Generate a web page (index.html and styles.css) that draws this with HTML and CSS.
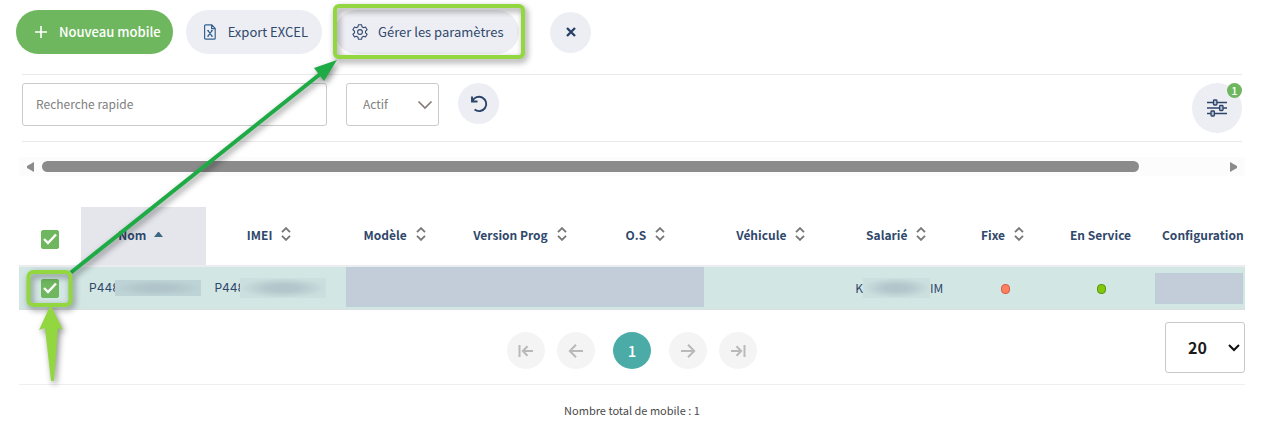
FILE: index.html
```
<!DOCTYPE html>
<html lang="fr">
<head>
    <meta charset="UTF-8">
    <meta name="viewport" content="width=device-width, initial-scale=1.0">
    <title>Mobiles</title>
    <link rel="stylesheet" href="styles.css">
</head>
<body>
    <svg class="symbols" aria-hidden="true">
        <symbol id="sort" viewBox="0 0 10 14">
            <path d="M1 5.2 5 1.2l4 4M1 8.8l4 4 4-4" fill="none" stroke="#777" stroke-width="1.9"/>
        </symbol>
    </svg>

    <div class="toolbar">
        <button type="button" class="btn btn-primary">
            <svg width="12" height="12" viewBox="0 0 12 12"><path d="M6 0v12M0 6h12" stroke="#fff" stroke-width="1.6"/></svg>
            <span>Nouveau mobile</span>
        </button>
        <button type="button" class="btn">
            <svg width="12" height="16" viewBox="0 0 12 16" fill="none" stroke="#34618f" stroke-width="1.2">
                <path d="M1.6.8h6.2l3.4 3.6v9.8a1 1 0 0 1-1 1H1.6a1 1 0 0 1-1-1V1.8a1 1 0 0 1 1-1zM7.6.8v3.8h3.6"/>
                <path d="M4 6.6l4 5.6M8 6.6l-4 5.6M3.2 6.6h1.8M7 6.6h1.8M3.2 12.2h1.8M7 12.2h1.8"/>
            </svg>
            <span>Export EXCEL</span>
        </button>
        <button type="button" class="btn btn-settings">
            <svg width="16" height="16" viewBox="0 0 16 16" fill="none" stroke="#34496d" stroke-width="1.1" stroke-linejoin="round">
                <path d="M6.4.8h3.2l.4 2 1.5.9 2-.7 1.6 2.8-1.6 1.3v1.8l1.6 1.3-1.6 2.8-2-.7-1.5.9-.4 2H6.4l-.4-2-1.5-.9-2 .7-1.6-2.8 1.6-1.3V7.1L.9 5.8 2.5 3l2 .7L6 2.8z"/>
                <circle cx="8" cy="8" r="2.4"/>
            </svg>
            <span>Gérer les paramètres</span>
        </button>
        <button type="button" class="btn-round btn-close" aria-label="Fermer">
            <svg width="10" height="10" viewBox="0 0 10 10"><path d="M1 1l8 8M9 1L1 9" stroke="#263e66" stroke-width="2.3"/></svg>
        </button>
    </div>

    <form class="filters">
        <input type="text" class="search" placeholder="Recherche rapide" aria-label="Recherche rapide">
        <select class="status" aria-label="Statut">
            <option>Actif</option>
            <option>Inactif</option>
        </select>
        <button type="reset" class="btn-round" aria-label="Réinitialiser">
            <svg width="18" height="18" viewBox="0 0 18 18" fill="none" stroke="#2c4469" stroke-width="1.9">
                <path d="M2 1.5v5h5.5M2.4 6.2A7.2 7.2 0 1 1 4.6 14.6"/>
            </svg>
        </button>
        <button type="button" class="btn-round btn-filter" aria-label="Filtres">
            <svg width="22" height="18" viewBox="0 0 22 18" fill="#b9c3d2" stroke="#2c4469" stroke-width="1.3">
                <path d="M1 3.5h20M1 9h20M1 14.5h20" stroke-width="1.6"/>
                <rect x="7.5" y="1" width="3.4" height="5" rx=".8"/>
                <rect x="13.6" y="6.5" width="3.4" height="5" rx=".8"/>
                <rect x="5" y="12" width="3.4" height="5" rx=".8"/>
            </svg>
            <span class="badge">1</span>
        </button>
    </form>

    <div class="scrollbar" aria-hidden="true">
        <svg width="7" height="10" viewBox="0 0 7 10"><path d="M7 0v10L0 6V4z" fill="#8b8b8b"/></svg>
        <div class="track"><div class="thumb"></div></div>
        <svg width="7" height="10" viewBox="0 0 7 10"><path d="M0 0v10l7-4V4z" fill="#8b8b8b"/></svg>
    </div>

    <div class="table-wrap">
        <table>
            <colgroup>
                <col class="col-check">
                <col span="7">
                <col class="col-fixed">
                <col class="col-service">
                <col class="col-config">
            </colgroup>
            <thead>
                <tr>
                    <th class="check"><input type="checkbox" checked aria-label="Tout sélectionner"></th>
                    <th class="sorted"><button type="button">Nom <svg width="9" height="5" viewBox="0 0 9 5"><path d="M0 5l4-5h1l4 5z" fill="#3d6883"/></svg></button></th>
                    <th><button type="button">IMEI <svg width="10" height="14"><use href="#sort"/></svg></button></th>
                    <th><button type="button">Modèle <svg width="10" height="14"><use href="#sort"/></svg></button></th>
                    <th><button type="button">Version Prog <svg width="10" height="14"><use href="#sort"/></svg></button></th>
                    <th><button type="button">O.S <svg width="10" height="14"><use href="#sort"/></svg></button></th>
                    <th><button type="button">Véhicule <svg width="10" height="14"><use href="#sort"/></svg></button></th>
                    <th><button type="button">Salarié <svg width="10" height="14"><use href="#sort"/></svg></button></th>
                    <th><button type="button">Fixe <svg width="10" height="14"><use href="#sort"/></svg></button></th>
                    <th>En Service</th>
                    <th class="config">Configuration</th>
                </tr>
            </thead>
            <tbody>
                <tr>
                    <td class="check"><input type="checkbox" checked aria-label="Sélectionner P448"></td>
                    <td><div class="serial">P448<span class="smudge"></span></div></td>
                    <td><div class="serial">P448<span class="smudge smudge-tall"></span></div></td>
                    <td colspan="3"><div class="mask mask-wide"></div></td>
                    <td></td>
                    <td><div class="employee">K<span class="smudge smudge-tall"></span>IM</div></td>
                    <td class="state"><span class="dot dot-red"></span></td>
                    <td class="state"><span class="dot dot-green"></span></td>
                    <td><div class="mask"></div></td>
                </tr>
            </tbody>
        </table>
    </div>

    <div class="footer">
        <nav class="pager" aria-label="Pagination">
            <button type="button" aria-label="Première page"><svg width="16" height="14" viewBox="0 0 16 14"><path d="M1.5 1v12M15 7H5M9.5 2.2L4.8 7l4.7 4.8"/></svg></button>
            <button type="button" aria-label="Page précédente"><svg width="16" height="14" viewBox="0 0 16 14"><path d="M15 7H2M8 .8L1.8 7 8 13.2"/></svg></button>
            <button type="button" class="current">1</button>
            <button type="button" aria-label="Page suivante"><svg width="16" height="14" viewBox="0 0 16 14"><path d="M1 7h13M8 .8L14.2 7 8 13.2"/></svg></button>
            <button type="button" aria-label="Dernière page"><svg width="16" height="14" viewBox="0 0 16 14"><path d="M14.5 1v12M1 7h10M6.5 2.2L11.2 7l-4.7 4.8"/></svg></button>
        </nav>
        <select class="page-size" aria-label="Lignes par page">
            <option>20</option>
            <option>50</option>
        </select>
    </div>

    <p class="total">Nombre total de mobile : 1</p>

    <!-- callouts drawn over the page -->
    <svg class="callouts" width="560" height="400" viewBox="0 0 560 400" aria-hidden="true">
        <g class="shadow">
            <rect x="335" y="6" width="188" height="51" rx="4" fill="none" stroke="#92d73f" stroke-width="4"/>
        </g>
        <g class="shadow">
            <path d="M71 272.5L324 71" stroke="#1eaa45" stroke-width="4"/>
            <path d="M337 60l-23 8 10 13z" fill="#1eaa45"/>
        </g>
        <g class="shadow">
            <rect x="28.5" y="272" width="42" height="33" rx="5" fill="none" stroke="#92d73f" stroke-width="4"/>
            <path d="M50.5 305L63 330l-5-2-4 53h-3l-6-53-6 2z" fill="#92d73f"/>
        </g>
    </svg>
</body>
</html>
```
FILE: styles.css
```
* {
    box-sizing: border-box;
}
body {
    position: relative;
    margin: 0;
    padding: 10px 18px 0 19px;
    background: #fff;
    color: #2f486b;
    font-family: "Noto Sans CJK SC", "Open Sans", sans-serif;
    font-size: 12px;
}
button, input, select {
    margin: 0;
    font-family: inherit;
    color: inherit;
}
button {
    padding: 0;
    border: none;
    background: none;
    cursor: pointer;
}
svg {
    flex: none;
}
.symbols {
    position: absolute;
    width: 0;
    height: 0;
}

/* Toolbar */
.toolbar {
    display: flex;
    align-items: center;
    gap: 13px;
    margin-left: -3px;
}
.btn {
    display: flex;
    align-items: center;
    gap: 12px;
    height: 44px;
    padding: 0 14px 0 18px;
    border-radius: 22px;
    background: #edeef3;
    font-size: 13px;
    white-space: nowrap;
}
.btn span {
    padding-bottom: 1px;
}
.btn-primary {
    padding: 0 12px 0 19px;
    background: #6fb75f;
    color: #fff;
    font-weight: 500;
}
.btn-settings {
    gap: 10px;
    padding: 0 16px 0 17px;
}
.btn-round {
    display: flex;
    align-items: center;
    justify-content: center;
    width: 41px;
    height: 41px;
    border-radius: 50%;
    background: #edeef3;
}
.btn-close {
    margin-left: 18px;
}

/* Filters */
.filters {
    display: flex;
    align-items: flex-start;
    gap: 19px;
    margin: 20px 3px 0;
    padding: 8px 0;
    border-top: 1px solid #e9e9ec;
    border-bottom: 1px solid #e9e9ec;
}
.search, .status {
    height: 43px;
    border: 1px solid #cbcbcb;
    border-radius: 3px;
    background-color: #fff;
    color: #808080;
    font-size: 12px;
}
.search {
    width: 305px;
    padding: 0 13px 2px;
}
.search::placeholder {
    color: #808080;
}
.status {
    width: 93px;
    padding: 0 16px 2px;
    appearance: none;
    background-image: url("data:image/svg+xml,%3Csvg xmlns='http://www.w3.org/2000/svg' width='16' height='10'%3E%3Cpath d='M1.5 1.5L8 8l6.5-6.5' fill='none' stroke='%23857c78' stroke-width='1.7'/%3E%3C/svg%3E");
    background-repeat: no-repeat;
    background-position: right 5px center;
}
.btn-filter {
    position: relative;
    width: 50px;
    height: 50px;
    margin-left: auto;
}
.badge {
    position: absolute;
    top: 0;
    right: 0;
    width: 15px;
    height: 15px;
    border-radius: 50%;
    background: #6fb75f;
    color: #fff;
    font-size: 11px;
    font-weight: 500;
    line-height: 15px;
}

/* Horizontal scrollbar */
.scrollbar {
    display: flex;
    align-items: center;
    gap: 8px;
    height: 19px;
    margin-top: 15px;
    padding: 0 8px;
    background: #fcfcfc;
}
.track {
    flex: 1;
}
.thumb {
    width: 93%;
    height: 11px;
    border-radius: 6px;
    background: #8b8b8b;
}

/* Table */
.table-wrap {
    margin-top: 31px;
    overflow: hidden;
}
table {
    width: 100%;
    table-layout: fixed;
    border-collapse: collapse;
}
.col-check {
    width: 62px;
}
.col-fixed {
    width: 87px;
}
.col-service {
    width: 109px;
}
.col-config {
    width: 90px;
}
th {
    height: 59px;
    padding: 0 0 4px;
    border-bottom: 2px solid #ececf0;
    font-size: 12px;
    font-weight: bold;
    white-space: nowrap;
}
th button {
    display: inline-flex;
    align-items: center;
    gap: 9px;
    font-size: 12px;
    font-weight: bold;
}
.sorted {
    padding-right: 6px;
    background: #e5e6ec;
}
.sorted button {
    gap: 8px;
}
.config {
    padding-left: 7px;
    text-align: left;
}
td {
    height: 43px;
    padding: 0;
    border-bottom: 1px solid #dcdfdf;
    background: #d2e6e4;
}
th.check {
    padding: 6px 0 0;
}
.check input {
    display: block;
    width: 18px;
    height: 19px;
    margin: 0 auto;
    appearance: none;
    border-radius: 2px;
    background: #fff;
    border: 1px solid #6fb75f;
}
.check input:checked {
    background: #6fb75f url("data:image/svg+xml,%3Csvg xmlns='http://www.w3.org/2000/svg' width='14' height='12'%3E%3Cpath d='M1 6l4 4L13 1.5' fill='none' stroke='white' stroke-width='2.4'/%3E%3C/svg%3E") no-repeat center;
}
.serial, .employee {
    display: flex;
    align-items: center;
    padding-bottom: 1px;
}
.serial {
    padding-left: 8px;
    font-family: Inter, sans-serif;
}
.employee {
    justify-content: center;
    padding-left: 6px;
}
.smudge {
    width: 86px;
    height: 16px;
    margin-left: -5px;
    background: radial-gradient(closest-side, #b0c4c9 30%, #bed3d5 100%);
}
.smudge-tall {
    height: 20px;
    background: radial-gradient(closest-side, #b2c6cb 30%, #cbdfdf 100%);
}
.employee .smudge {
    width: 67px;
    margin-left: 0;
}
.mask {
    height: 31px;
    margin-right: 2px;
    border: 1px solid #bccfd9;
    background: #c2cdd9;
}
.mask-wide {
    height: 40px;
    margin: 0 4px 2px 14px;
}
.state {
    padding-bottom: 3px;
    text-align: center;
}
.dot {
    display: inline-block;
    width: 9px;
    height: 10px;
    margin-left: 6px;
    border: 1px solid;
    border-radius: 4px;
    vertical-align: middle;
}
.dot-red {
    border-color: #d65d49;
    background: #ff805f;
}
.dot-green {
    margin-left: 2px;
    border-color: #5b9512;
    background: #80c80c;
}

/* Footer */
.footer {
    display: grid;
    grid-template-columns: 1fr auto 1fr;
    align-items: start;
    padding: 12px 0 11px;
    border-bottom: 1px solid #efeff1;
}
.pager {
    display: flex;
    grid-column: 2;
    gap: 12px;
    margin-top: 10px;
}
.pager button {
    display: flex;
    align-items: center;
    justify-content: center;
    width: 38px;
    height: 37px;
    border-radius: 50%;
    background: #f4f4f4;
}
.pager path {
    fill: none;
    stroke: #b9b9b9;
    stroke-width: 2;
}
.pager .current {
    margin: 0 6px;
    padding-bottom: 1px;
    background: #4aaba7;
    color: #fff;
    font-size: 15px;
    font-weight: 500;
}
.page-size {
    justify-self: end;
    width: 80px;
    height: 51px;
    padding: 0 22px 2px;
    appearance: none;
    border: 1px solid #c9c9c9;
    border-radius: 3px;
    background: url("data:image/svg+xml,%3Csvg xmlns='http://www.w3.org/2000/svg' width='12' height='8'%3E%3Cpath d='M1 1l5 5 5-5' fill='none' stroke='%23111' stroke-width='2'/%3E%3C/svg%3E") no-repeat right 4px center;
    color: #1b1b1b;
    font-size: 16px;
    font-weight: bold;
}
.total {
    margin: 0;
    padding: 15px 0 0;
    color: #4a4a4a;
    font-size: 11px;
    line-height: 20px;
    text-align: center;
}

/* Callouts */
.callouts {
    position: absolute;
    top: 0;
    left: 0;
    pointer-events: none;
}
.shadow {
    filter: drop-shadow(2px 3px 3px rgba(0, 0, 0, 0.45));
}
```
